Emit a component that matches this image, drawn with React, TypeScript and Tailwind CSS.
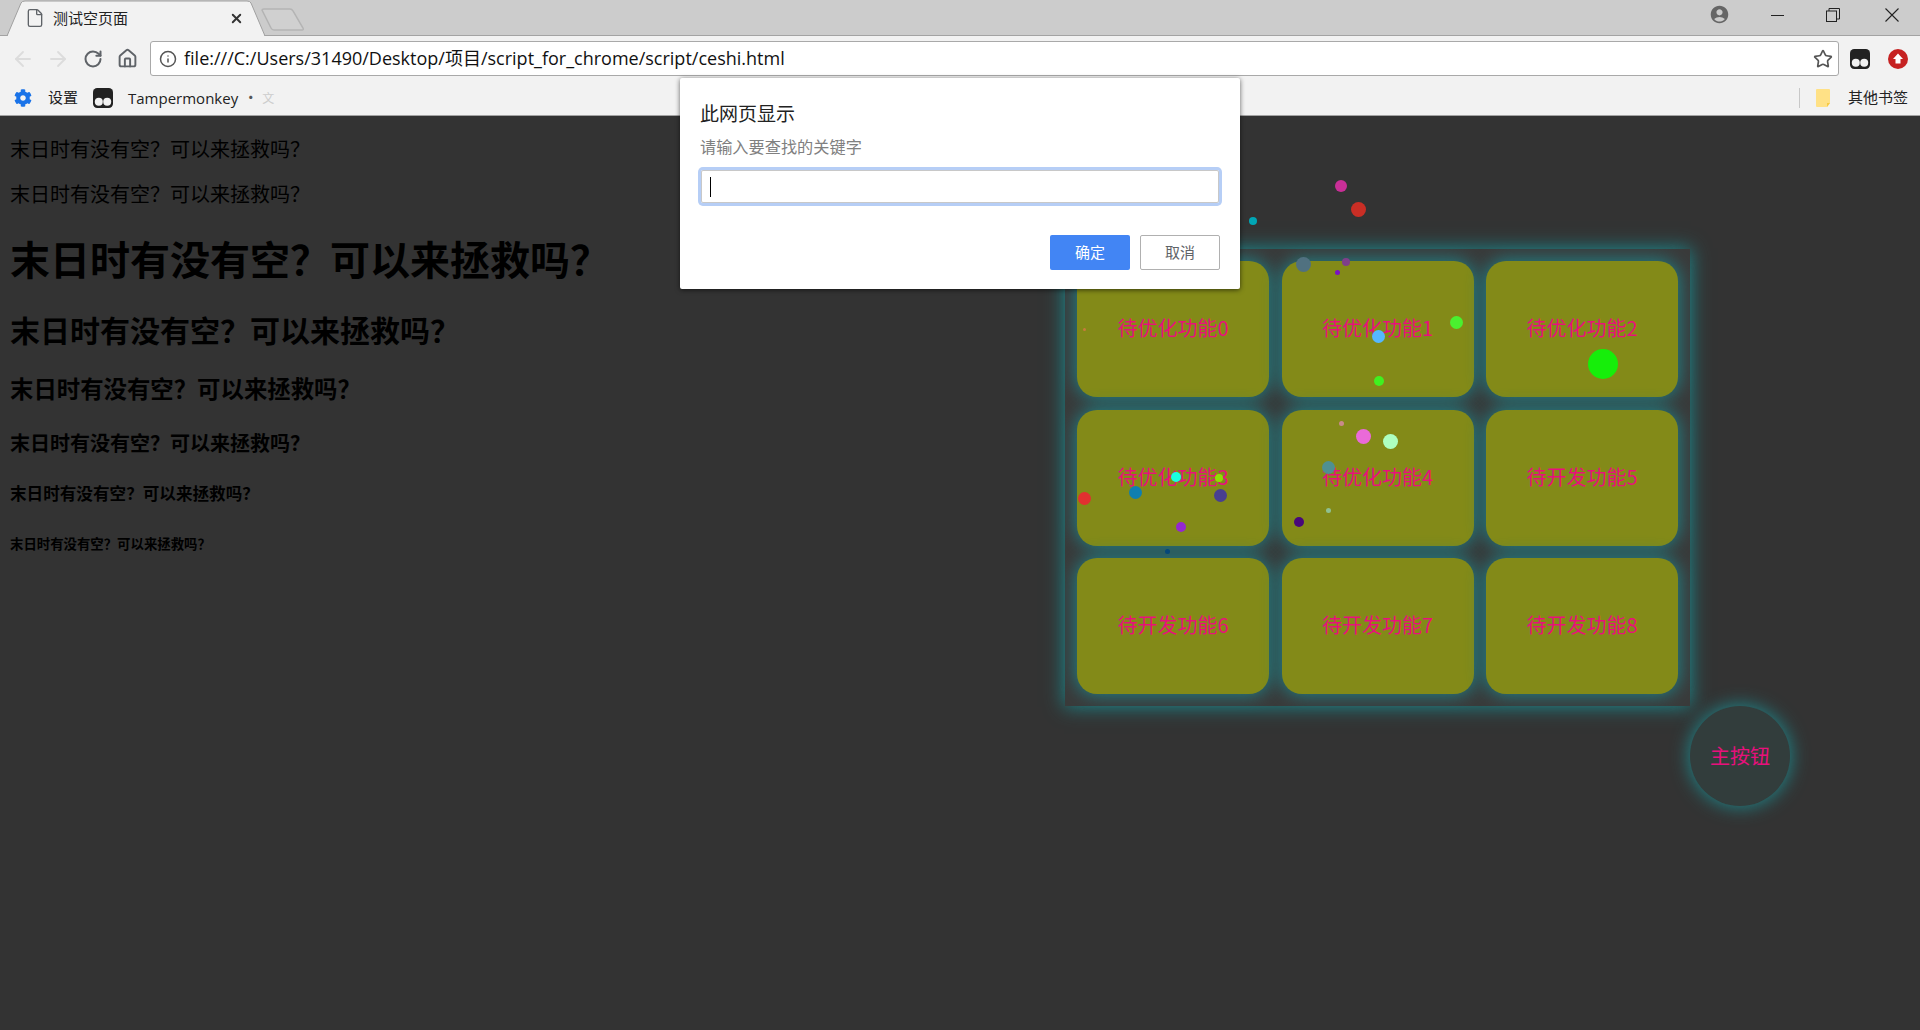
import { ArrowLeft, ArrowRight, RotateCw, Home, Info, Star, File, X } from "lucide-react"
import { FaCog } from "react-icons/fa"
import { MdAccountCircle } from "react-icons/md"

const cards = [
  "待优化功能0", "待优化功能1", "待优化功能2",
  "待优化功能3", "待优化功能4", "待开发功能5",
  "待开发功能6", "待开发功能7", "待开发功能8",
]

const particles = [
  "left-[1335px] top-[180px] w-[12px] h-[12px] bg-[#c92f97]",
  "left-[1351px] top-[202px] w-[15px] h-[15px] bg-[#c92e25]",
  "left-[1249px] top-[217px] w-[8px] h-[8px] bg-[#00a6b5]",
  "left-[1296px] top-[257px] w-[15px] h-[15px] bg-[#507180]",
  "left-[1342px] top-[258px] w-[8px] h-[8px] bg-[#7f3f8a]",
  "left-[1335px] top-[270px] w-[5px] h-[5px] bg-[#7a12c4]",
  "left-[1083px] top-[328px] w-[3px] h-[3px] bg-[#c77b3c]",
  "left-[1372px] top-[330px] w-[13px] h-[13px] bg-[#55b8ff]",
  "left-[1450px] top-[316px] w-[13px] h-[13px] bg-[#4af02f]",
  "left-[1374px] top-[376px] w-[10px] h-[10px] bg-[#40f020]",
  "left-[1588px] top-[349px] w-[30px] h-[30px] bg-[#16ee0a]",
  "left-[1171px] top-[472px] w-[10px] h-[10px] bg-[#1affe0]",
  "left-[1215px] top-[474px] w-[8px] h-[8px] bg-[#8fe000]",
  "left-[1129px] top-[486px] w-[13px] h-[13px] bg-[#0f7fb0]",
  "left-[1214px] top-[489px] w-[13px] h-[13px] bg-[#483f90]",
  "left-[1078px] top-[492px] w-[13px] h-[13px] bg-[#e23030]",
  "left-[1176px] top-[522px] w-[10px] h-[10px] bg-[#9428d0]",
  "left-[1165px] top-[549px] w-[5px] h-[5px] bg-[#05477a]",
  "left-[1339px] top-[421px] w-[5px] h-[5px] bg-[#c98a8a]",
  "left-[1356px] top-[429px] w-[15px] h-[15px] bg-[#ea6ad8]",
  "left-[1383px] top-[434px] w-[15px] h-[15px] bg-[#aeffc0]",
  "left-[1322px] top-[461px] w-[13px] h-[13px] bg-[#4f9090]",
  "left-[1326px] top-[508px] w-[5px] h-[5px] bg-[#8fc090]",
  "left-[1294px] top-[517px] w-[10px] h-[10px] bg-[#48087a]",
]

function MonkeyIcon({ className }: { className: string }) {
  return (
    <svg viewBox="0 0 19 19" className={className}>
      <rect x="0" y="0" width="19" height="19" rx="4" fill="#222" />
      <circle cx="5.5" cy="13" r="3.8" fill="#f2f2f2" />
      <circle cx="13.5" cy="13" r="3.8" fill="#f2f2f2" />
    </svg>
  )
}

export default function App() {
  return (
    <div className="relative h-screen w-full overflow-hidden flex flex-col bg-[#333333] font-['Noto_Sans_CJK_SC',sans-serif]">
      {/* tab strip */}
      <div className="flex h-[36px] shrink-0 bg-[#cccccc] border-b border-[#a3a3a3]">
        <div className="relative ml-[7px] flex h-[36px] w-[258px] items-center">
          <svg viewBox="0 0 258 36" className="absolute inset-0 h-[36px] w-[258px]">
            <path d="M0 36 L14 3 Q15 1 18 1 L240 1 Q243 1 244 3 L258 36 Z" fill="#f2f2f2" stroke="#a0a0a0" />
            <path d="M1 36 L257 36" stroke="#f2f2f2" strokeWidth="2" />
          </svg>
          <File className="relative ml-[18px] h-[20px] w-[20px] text-[#5f6368]" strokeWidth={1.6} />
          <span className="relative ml-[8px] text-[15px] text-[#222]">测试空页面</span>
          <X className="relative ml-auto mr-[21px] h-[15px] w-[15px] text-[#333]" strokeWidth={3} />
        </div>
        <svg viewBox="0 0 44 24" className="-ml-[4px] mt-[8px] h-[24px] w-[44px]">
          <path d="M1 2 Q1 1 3 1 L29 1 Q31 1 32 3 L42 20 Q43 22 41 22 L13 22 Q11 22 10 20 Z" fill="#d0d0d0" stroke="#b4b4b4" strokeWidth="1.5" />
        </svg>
        <div className="ml-auto flex">
          <MdAccountCircle className="mr-[19px] mt-[4px] h-[21px] w-[21px] text-[#666]" />
          <div className="flex h-[30px] w-[57px] items-center justify-center">
            <div className="h-px w-[13px] bg-[#222]" />
          </div>
          <div className="-ml-[2px] mr-[2px] flex h-[30px] w-[57px] items-center justify-center">
            <svg viewBox="0 0 14 14" className="h-[14px] w-[14px]" fill="none" stroke="#222">
              <rect x="0.5" y="3" width="10" height="10.5" />
              <path d="M3 3 V0.5 H13.5 V11 H10.5" />
            </svg>
          </div>
          <div className="flex h-[30px] w-[57px] items-center justify-center">
            <svg viewBox="0 0 14 14" className="h-[14px] w-[14px]" stroke="#222" strokeWidth="1.1">
              <path d="M0.5 0.5 L13.5 13.5 M13.5 0.5 L0.5 13.5" />
            </svg>
          </div>
        </div>
      </div>

      {/* address bar */}
      <div className="flex h-[40px] shrink-0 items-start bg-[#f2f2f2] pl-[5px] pt-[5px]">
        <div className="flex h-[35px] w-[35px] items-center justify-center"><ArrowLeft className="h-[24px] w-[24px] text-[#dcdcdc]" strokeWidth={1.8} /></div>
        <div className="flex h-[35px] w-[35px] items-center justify-center"><ArrowRight className="h-[24px] w-[24px] text-[#dcdcdc]" strokeWidth={1.8} /></div>
        <div className="flex h-[35px] w-[35px] items-center justify-center"><RotateCw className="h-[20px] w-[20px] text-[#5f6368]" strokeWidth={2.4} /></div>
        <div className="flex h-[35px] w-[35px] items-center justify-center"><Home className="h-[21px] w-[21px] text-[#5f6368]" strokeWidth={2.2} /></div>
        <div className="ml-[5px] flex h-[35px] flex-1 items-center rounded-[3px] border border-[#a9a9a9] bg-white pl-[8px] pr-[5px]">
          <Info className="h-[18px] w-[18px] text-[#555]" strokeWidth={2} />
          <span className="ml-[7px] font-['Open_Sans','Noto_Sans_CJK_SC',sans-serif] text-[18px] text-[#111]">file:///C:/Users/31490/Desktop/项目/script_for_chrome/script/ceshi.html</span>
          <Star className="ml-auto h-[20px] w-[20px] text-[#555]" strokeWidth={2} />
        </div>
        <div className="flex h-[35px] w-[81px] items-center pl-[11px]">
          <MonkeyIcon className="h-[20px] w-[20px]" />
          <svg viewBox="0 0 20 20" className="ml-[18px] h-[20px] w-[20px]">
            <circle cx="10" cy="10" r="10" fill="#c62222" />
            <path d="M10 4.5 L15 10 H12.5 V14.5 H7.5 V10 H5 Z" fill="#fff" />
          </svg>
        </div>
      </div>

      {/* bookmarks */}
      <div className="flex h-[40px] shrink-0 items-center border-b border-[#a3a3a3] bg-[#f2f2f2] pl-[14px] pr-[12px] pt-[4px] text-[15px] text-[#222]">
        <FaCog className="h-[18px] w-[18px] text-[#1a73e8]" />
        <span className="ml-[16px]">设置</span>
        <MonkeyIcon className="ml-[15px] h-[20px] w-[20px]" />
        <span className="ml-[15px] mt-[2px] font-['Open_Sans',sans-serif]">Tampermonkey</span>
        <span className="ml-[5px] text-[#555]">•</span>
        <span className="ml-[4px] text-[12px] text-[#ccc]">文</span>
        <div className="ml-auto h-[20px] w-px bg-[#c8c8c8]" />
        <svg viewBox="0 0 14 18" className="ml-[16px] h-[18px] w-[14px]">
          <path d="M1 0 H13 Q14 0 14 1 V14 L11 18 H1 Q0 18 0 17 V1 Q0 0 1 0 Z" fill="#ffe186" />
          <path d="M11 18 V14 H14 Z" fill="#f6c944" />
        </svg>
        <span className="ml-[18px]">其他书签</span>
      </div>

      {/* page */}
      <main className="flex-1 pl-[10px] text-black">
        <p className="mt-[20px] text-[20px] leading-[26px]">末日时有没有空？可以来拯救吗？</p>
        <p className="mt-[19px] text-[20px] leading-[26px]">末日时有没有空？可以来拯救吗？</p>
        <h1 className="mt-[25px] text-[40px] font-bold leading-[52px]">末日时有没有空？可以来拯救吗？</h1>
        <h2 className="mt-[25px] text-[30px] font-bold leading-[40px]">末日时有没有空？可以来拯救吗？</h2>
        <h3 className="mt-[24px] text-[23.4px] font-bold leading-[30px]">末日时有没有空？可以来拯救吗？</h3>
        <h4 className="mt-[27px] text-[20px] font-bold leading-[26px]">末日时有没有空？可以来拯救吗？</h4>
        <h5 className="mt-[26px] text-[16.6px] font-bold leading-[22px]">末日时有没有空？可以来拯救吗？</h5>
        <h6 className="mt-[30px] text-[13.4px] font-bold leading-[18px]">末日时有没有空？可以来拯救吗？</h6>
      </main>

      {/* floating function panel */}
      <div className="absolute left-[1065px] top-[249px] grid h-[457px] w-[625px] grid-cols-3 grid-rows-3 gap-x-[12.5px] gap-y-[12.5px] bg-[#3a3a3a] p-[12px] shadow-[0_0_18px_1px_#1f8589]">
        {cards.map((label) => (
          <div key={label} className="flex items-center justify-center rounded-[20px] bg-[#838a18] pb-[2px] text-[20px] text-[#e8107c] shadow-[0_0_18px_1px_#1f8589]">
            {label}
          </div>
        ))}
      </div>

      <button className="absolute left-[1690px] top-[706px] h-[100px] w-[100px] rounded-full bg-[#323d3c] text-[20px] text-[#e8107c] shadow-[0_0_18px_1px_#1f8589]">
        主按钮
      </button>

      {particles.map((p) => (
        <div key={p} className={"absolute rounded-full " + p} />
      ))}

      {/* prompt dialog */}
      <div className="absolute left-[680px] top-[78px] h-[211px] w-[560px] rounded-[2px] bg-white px-[20px] pt-[22px] shadow-[0_1px_5px_rgba(0,0,0,0.6)]">
        <div className="text-[19px] leading-[26px] text-[#222]">此网页显示</div>
        <div className="mt-[9px] text-[16.2px] leading-[22px] text-[#808080]">请输入要查找的关键字</div>
        <div className="mx-[1px] mt-[13px] flex h-[33px] items-center rounded-[2px] border border-[#c8c8c8] pl-[8px] ring-[3px] ring-[#b6cef6]">
          <div className="h-[20px] w-px bg-black" />
        </div>
        <div className="mt-[32px] flex justify-end gap-[10px]">
          <button className="h-[35px] w-[80px] rounded-[2px] bg-[#4285f4] text-[15px] text-white">确定</button>
          <button className="h-[35px] w-[80px] rounded-[2px] border border-[#b0b0b0] bg-white text-[15px] text-[#5f6368]">取消</button>
        </div>
      </div>
    </div>
  )
}
